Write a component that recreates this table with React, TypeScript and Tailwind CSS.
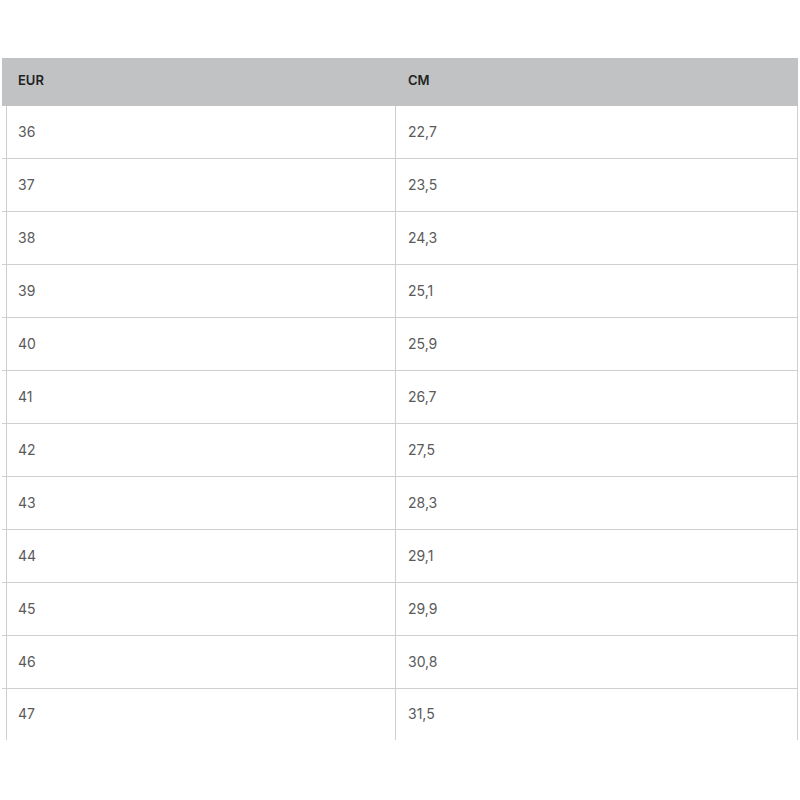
const rows: [string, string][] = [
  ["36", "22,7"],
  ["37", "23,5"],
  ["38", "24,3"],
  ["39", "25,1"],
  ["40", "25,9"],
  ["41", "26,7"],
  ["42", "27,5"],
  ["43", "28,3"],
  ["44", "29,1"],
  ["45", "29,9"],
  ["46", "30,8"],
  ["47", "31,5"],
];

export default function App() {
  return (
    <div className="min-h-[800px] bg-white pt-[58px] pl-[2px] font-['Inter',sans-serif]">
      <div className="w-[796px]">
        <div className="grid h-[48px] grid-cols-[393px_1fr] bg-[#c1c2c3] text-[13px] font-semibold text-[#222]">
          <div className="flex items-center pl-[16px] pb-[3px]">EUR</div>
          <div className="flex items-center pl-[13px] pb-[3px]">CM</div>
        </div>
        {rows.map(([eur, cm], i) => (
          <div
            key={eur}
            className={
              i === rows.length - 1
                ? "grid h-[51px] grid-cols-[393px_1fr] text-[14px] text-[#5a5a5a]"
                : "grid h-[53px] grid-cols-[393px_1fr] border-b border-[#cfcfcf] text-[14px] text-[#5a5a5a]"
            }
          >
            <div className="flex h-full pl-[4px]">
              <div className="flex h-full flex-1 items-center border-l border-[#cfcfcf] pl-[11px] pb-[2px]">
                {eur}
              </div>
            </div>
            <div className="flex h-full items-center border-l border-r border-[#cfcfcf] pl-[12px] pb-[2px]">
              {cm}
            </div>
          </div>
        ))}
      </div>
    </div>
  );
}
